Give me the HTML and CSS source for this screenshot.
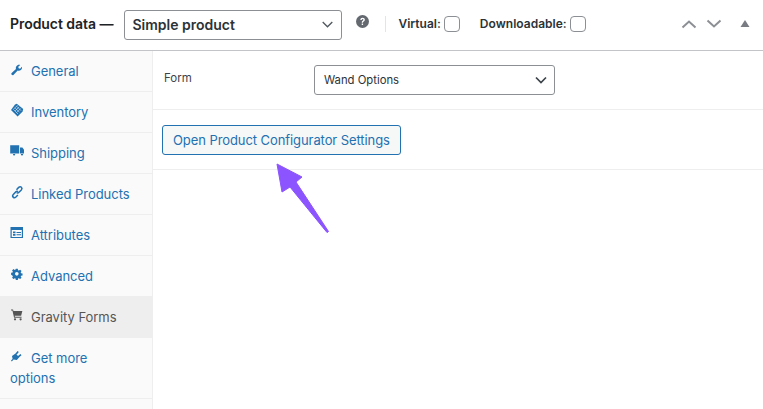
FILE: index.html
```html
<!DOCTYPE html>
<html lang="en">
<head>
<meta charset="utf-8">
<title>Product data</title>
<link rel="stylesheet" href="styles.css">
</head>
<body>
<div class="box">
  <header class="head">
    <h2 class="title">Product data —</h2>
    <div class="select type-select"><span>Simple product</span>
      <svg class="chev" width="11" height="7" viewBox="0 0 11 7"><path d="M.7 1l4.800 4.800L10.300 1" fill="none" stroke="#50575e" stroke-width="1.300"/></svg>
    </div>
    <svg class="help" width="13" height="13" viewBox="0 0 20 20"><circle cx="10" cy="10" r="10" fill="#646970"/><path d="M6.600 7.600C6.700 5.500 8.200 4.300 10.200 4.300c2 0 3.400 1.200 3.400 2.900 0 1.300-.7 2-1.700 2.700-.9.600-1.100 1-1.100 1.900H8.900c0-1.600.4-2.300 1.400-3 .8-.6 1.100-.9 1.100-1.500 0-.7-.5-1.100-1.200-1.100-.8 0-1.300.5-1.400 1.400zM8.800 13h2.100v2.300H8.800z" fill="#fff"/></svg>
    <span class="sep"></span>
    <label class="check first">Virtual:<span class="box-input"></span></label>
    <label class="check second">Downloadable:<span class="box-input"></span></label>
    <div class="handles">
      <svg width="16" height="10" viewBox="0 0 16 10"><path d="M1.500 8.500L8 2.500l6.500 6" fill="none" stroke="#8c8f94" stroke-width="2"/></svg>
      <svg width="16" height="10" viewBox="0 0 16 10"><path d="M1.500 1.500L8 7.500l6.500-6" fill="none" stroke="#8c8f94" stroke-width="2"/></svg>
      <svg class="tri" width="10" height="7" viewBox="0 0 10 7"><path d="M5 0l4.500 7H.5z" fill="#787c82"/></svg>
    </div>
  </header>
  <div class="body">
    <nav class="tabs">
      <a class="tab"><svg class="ico" viewBox="0 0 14 14"><path transform="translate(.7 1.700) scale(.85)" d="M.8 11.300L6.200 6.300C5.600 4.400 6.300 2.600 8 1.700c1.100-.6 2.200-.6 3.200-.2L8.900 3.700l.4 1.700 1.700.4 2.200-2.300c.4 1.300 0 2.900-1.200 3.900-1.100.9-2.500 1.100-3.800.6l-5 5.300c-.7.500-1.300.3-1.900-.2-.6-.6-.8-1.200-.4-1.500z"/></svg>General</a>
      <a class="tab"><svg class="ico" viewBox="0 0 14 14"><path d="M6.800.8l6.400 5.100-.6 2.500-5 5.100-6.600-6.400L5 1.500z"/><path d="M3.400 6.400l4.200-4.200M5 8l4.200-4.200M6.600 9.600l4.200-4.200M3.400 6.400l4.600 4.600M5 4.800l4.600 4.600M6.600 3.200l4.600 4.600" stroke="#fafafa" stroke-width=".5" fill="none"/></svg>Inventory</a>
      <a class="tab"><svg class="ico" viewBox="0 0 14 14"><path d="M.2 1.200h9v8.400H5.300a1.300 1.300 0 0 0-2.300 0H.2zM10 3.600h2.400L14 5.800v3.800h-.9a1.300 1.300 0 0 0-2.300 0H10z"/><circle cx="4.100" cy="10.500" r="1.100"/><circle cx="12" cy="10.500" r="1.100"/></svg>Shipping</a>
      <a class="tab"><svg class="ico" viewBox="0 0 14 14"><g fill="none" stroke="#2271b1" stroke-width="1.500" transform="translate(.5 -.5)"><path d="M6 5.200l2.200-2.300c.9-.8 2-.8 2.700-.1s.7 1.800-.1 2.700L8.500 7.800c-.9.800-1.800.7-2.300.2"/><path d="M7.500 7.300c-.5-.6-1.400-.6-2.200.1L2.800 9.900c-.8.900-.8 2-.1 2.700s1.800.7 2.700-.1l2-2.100"/></g></svg>Linked Products</a>
      <a class="tab"><svg class="ico" viewBox="0 0 14 14"><path fill-rule="evenodd" d="M.5 1h12.500v11H.5zM1.700 4v6.900h10.100V4zM3 5.500h2.500v1.700H3zM6.500 6H11v1H6.500zM3 8h2.500v1.700H3zM6.500 8.300H11v1H6.500z"/></svg>Attributes</a>
      <a class="tab"><svg class="ico" viewBox="0 0 14 14"><path transform="translate(1 1) scale(.83)" fill-rule="evenodd" d="M5.800.8h2.400l.3 1.800 1 .4 1.500-1 1.700 1.700-1 1.500.4 1 1.800.3v2.400l-1.800.3-.4 1 1 1.500-1.700 1.700-1.500-1-1 .4-.3 1.800H5.800l-.3-1.800-1-.4-1.500 1-1.700-1.700 1-1.500-.4-1L.1 8.200V5.800l1.800-.3.4-1-1-1.500L3 1.300l1.500 1 1-.4zM7 4.800a2.200 2.200 0 1 0 0 4.400 2.200 2.200 0 0 0 0-4.400z"/></svg>Advanced</a>
      <a class="tab active"><svg class="ico" viewBox="0 0 14 14"><path transform="translate(.6 .5) scale(.87)" d="M.5 1.200h2.300l.5 1.600h10.200l-1.400 5.500H4.700l.3 1.200h7.600v1H4l-1.900-8.300H.5z"/><circle cx="5" cy="11.300" r="1.100"/><circle cx="10.600" cy="11.300" r="1.100"/></svg>Gravity Forms</a>
      <a class="tab tall"><svg class="ico" viewBox="0 0 14 14"><path d="M1 11.600L2.600 10 2 7l3.500-2.500L9.300 8.300 6.800 11 3.600 10.600 1.800 12.500zM5.500 4.500L7.600 2l1.200 1L6.800 5.600zM8 7l2.500-2 1 1.200L9.100 8.200z"/></svg>Get more<br>options</a>
    </nav>
    <main class="panel">
      <div class="row form-row">
        <span class="field-label">Form</span>
        <div class="select form-select"><span>Wand Options</span>
          <svg class="chev" width="12" height="8" viewBox="0 0 12 8"><path d="M1 1.500l5 5 5-5" fill="none" stroke="#3c434a" stroke-width="1.700"/></svg>
        </div>
      </div>
      <div class="row button-row">
        <a class="button">Open Product Configurator Settings</a>
      </div>
      <svg class="arrow" width="62" height="76" viewBox="0 0 62 76"><path d="M1 1L26 14 20 19 52.500 68.500 51 69.500 14 24 6 29z" fill="#8c54ff" stroke="#8c54ff" stroke-width="1" stroke-linejoin="round"/></svg>
    </main>
  </div>
</div>
</body>
</html>
```

FILE: styles.css
```css
* { box-sizing: border-box; }
html, body { margin: 0; padding: 0; height: 100%; }
body { background: #fff; font-family: Inter, "Liberation Sans", sans-serif; font-size: 13px; color: #3c434a; overflow: hidden; }
.box { width: 763px; height: 409px; display: flex; flex-direction: column; }
.head { height: 51px; flex: none; display: flex; align-items: center; border-bottom: 1px solid #c3c4c7; padding: 0 0 0 10px; }
.title { margin: 0 11px 2px 0; font-size: 14px; font-weight: 600; color: #1d2327; line-height: 20px; letter-spacing: -.05px; }
.select { display: flex; align-items: center; justify-content: space-between; background: #fff; border: 1px solid #8c8f94; border-radius: 3px; color: #2c3338; }
.type-select { width: 218px; height: 30px; padding: 0 8px 0 7px; font-size: 14px; font-weight: 600; margin-bottom: 1px; }
.help { margin: 0 0 7px 14px; }
.sep { width: 1px; height: 16px; background: #e2e4e7; margin: 0 12px 2px 16px; }
.check { display: flex; align-items: center; font-size: 12px; font-weight: 600; color: #2c3338; margin-bottom: 3px; letter-spacing: .02px; }
.second { margin-left: 20px; }
.box-input { width: 16px; height: 16px; margin-left: 3px; background: #fff; border: 1px solid #8c8f94; border-radius: 4px; }
.handles { margin-left: auto; margin-right: 13px; display: flex; align-items: center; gap: 9px; margin-bottom: 3px; }
.tri { margin-left: 9px; }
.body { flex: 1; display: flex; min-height: 0; }
.tabs { width: 153px; flex: none; background: #fafafa; border-right: 1px solid #eee; display: flex; flex-direction: column; }
.tab { display: block; height: 41px; padding: 10px 10px; line-height: 20px; color: #2271b1; border-bottom: 1px solid #eee; font-size: 13px; letter-spacing: -.03px; }
.tab.tall { height: 61px; }
.tab.active { background: #eee; color: #555; border-bottom-color: #eee; }
.ico { width: 14px; height: 14px; display: inline-block; vertical-align: -1px; margin-right: 7px; fill: #2271b1; position: relative; top: -1px; }
.active .ico { fill: #555; }
.panel { position: relative; flex: 1; min-width: 0; }
.row { border-bottom: 1px solid #eee; }
.form-row { height: 59px; display: flex; padding: 14px 0 0 11px; }
.field-label { width: 150px; font-size: 11.500px; line-height: 26px; color: #3c434a; }
.form-select { width: 241px; height: 30px; padding: 0 7px 0 9px; font-size: 11.300px; }
.button-row { height: 60px; padding: 15px 0 0 9px; }
.button { display: inline-flex; align-items: center; height: 30px; padding: 0 10px; border: 1px solid #2271b1; border-radius: 3px; background: #f6f7f7; color: #2271b1; font-size: 13px; letter-spacing: -.08px; white-space: nowrap; }
.arrow { position: absolute; left: 123px; top: 112px; }
```
